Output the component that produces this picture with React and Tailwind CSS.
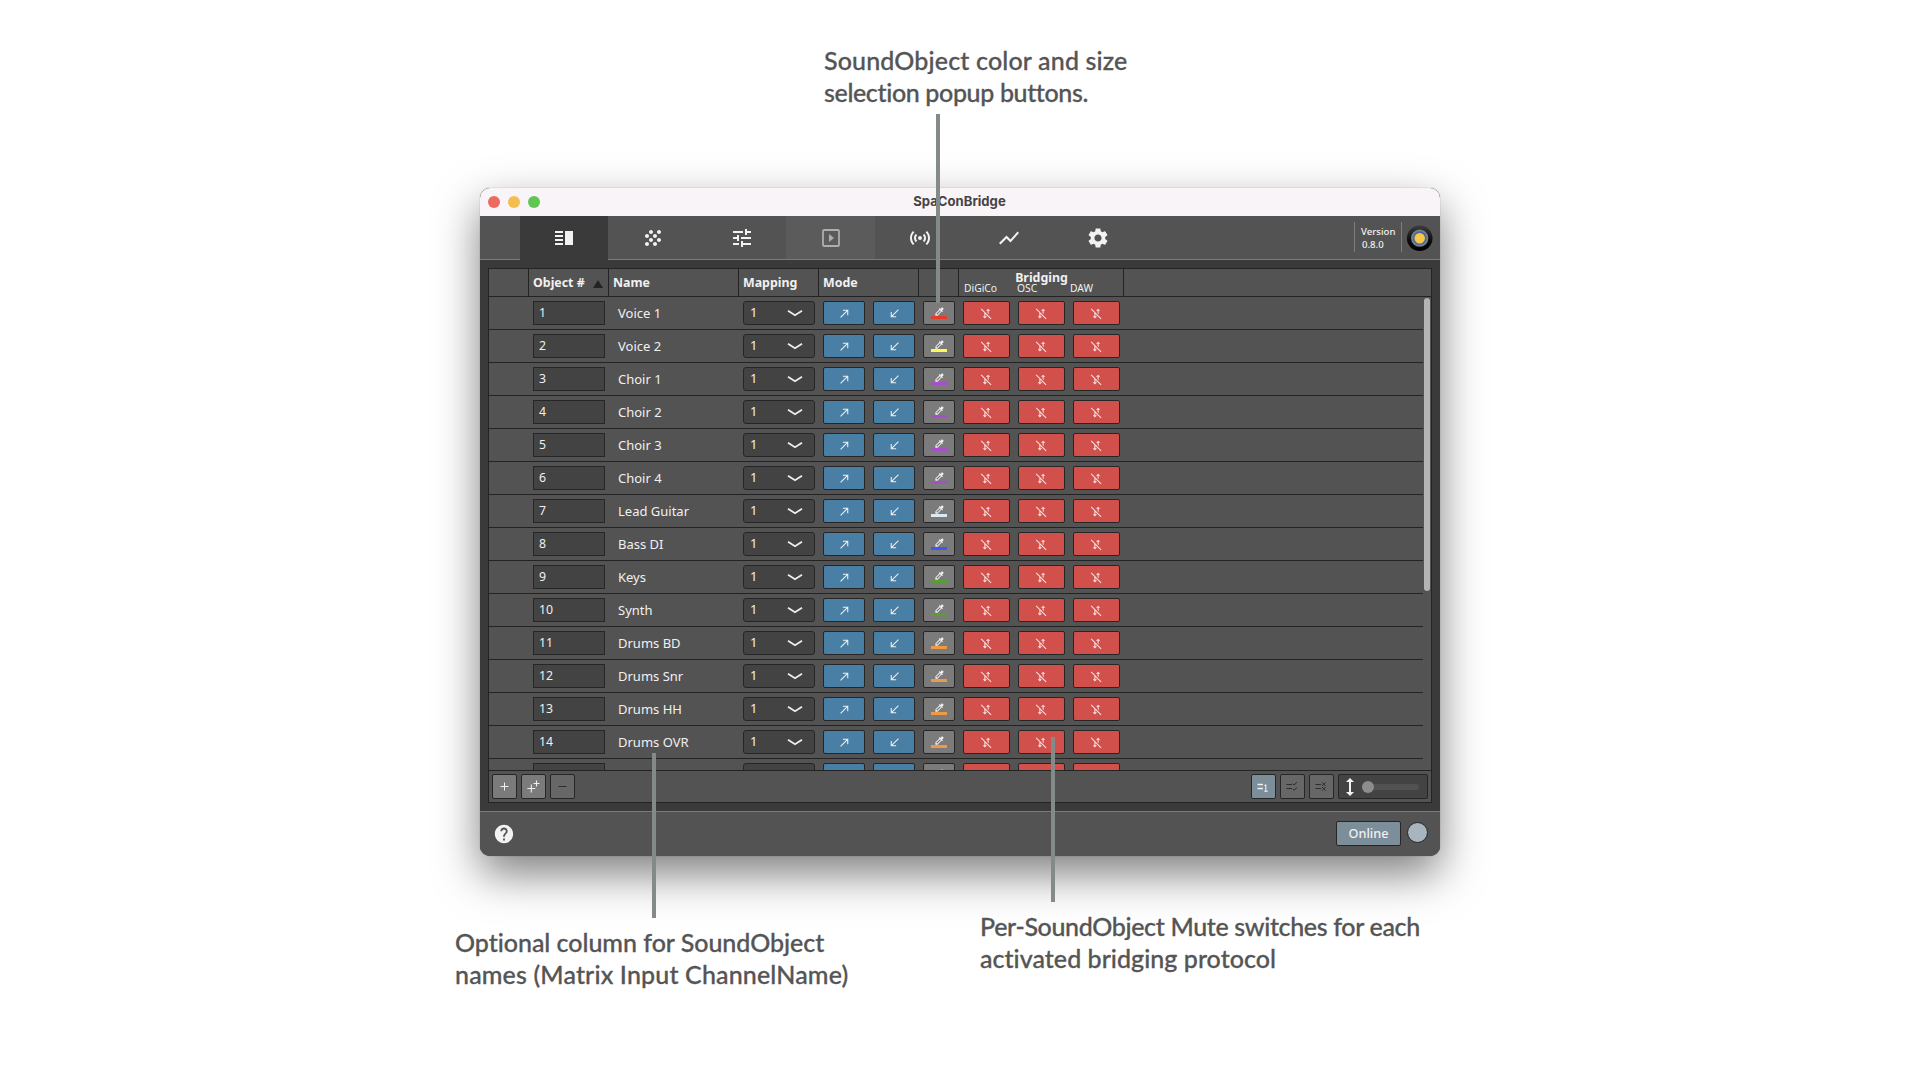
import React from "react";
import {
  MdVerticalSplit,
  MdGrain,
  MdTune,
  MdSensors,
  MdShowChart,
  MdSettings,
  MdCallMade,
  MdCallReceived,
  MdColorize,
  MdMobiledataOff,
  MdHelp,
  MdHeight,
} from "react-icons/md";

const objects = [
  ["Voice 1", "#e8392b"],
  ["Voice 2", "#fdfb52"],
  ["Choir 1", "#a94ecb"],
  ["Choir 2", "#a94ecb"],
  ["Choir 3", "#a94ecb"],
  ["Choir 4", "#a94ecb"],
  ["Lead Guitar", "#dbe9f5"],
  ["Bass DI", "#3f57f3"],
  ["Keys", "#5b9d31"],
  ["Synth", "#5b9d31"],
  ["Drums BD", "#ee9a45"],
  ["Drums Snr", "#ee9a45"],
  ["Drums HH", "#ee9a45"],
  ["Drums OVR", "#ee9a45"],
  ["", "#ee9a45"],
];

function PlayBox() {
  return (
    <svg width="24" height="24" viewBox="0 0 24 24">
      <rect x="4" y="4" width="16" height="16" rx="1" fill="none" stroke="#adadad" strokeWidth="1.8" />
      <path d="M10 8v8l5-4z" fill="#adadad" />
    </svg>
  );
}

function Tab({ children, className = "border-b border-[#7b7b7b]" }) {
  return <div className={`flex h-[44px] w-[89px] items-center justify-center ${className}`}>{children}</div>;
}

function Toolbar() {
  return (
    <div className="flex h-[44px] bg-[#535353] text-[#f2f2f2]">
      <div className="w-[40px] border-b border-[#7b7b7b]" />
      <div className="flex h-[44px] w-[88px] items-center justify-center bg-[#3a3a3a]">
        <MdVerticalSplit size={24} />
      </div>
      <Tab><MdGrain size={24} /></Tab>
      <Tab><MdTune size={24} /></Tab>
      <Tab className="border-b border-[#7b7b7b] bg-[#5b5b5b]"><PlayBox /></Tab>
      <Tab><MdSensors size={24} /></Tab>
      <Tab><MdShowChart size={24} /></Tab>
      <Tab><MdSettings size={24} /></Tab>
      <div className="flex flex-1 items-start justify-end border-b border-[#7b7b7b]">
        <div className="mt-[6px] h-[30px] w-[48px] border-x border-[#7d7d7d] pt-[3px] pl-[6px] text-[9.6px] leading-[13px] font-medium">
          <div>Version</div>
          <div className="pl-px">0.8.0</div>
        </div>
        <svg className="mt-[9px] mr-[7px] ml-[4px]" width="27" height="27" viewBox="0 0 27 27">
          <defs>
            <linearGradient id="knob" x1="0" y1="0" x2="0" y2="1">
              <stop offset="0" stopColor="#3c3c3c" />
              <stop offset="0.6" stopColor="#0c0c0c" />
              <stop offset="1" stopColor="#000" />
            </linearGradient>
          </defs>
          <circle cx="13.7" cy="13.2" r="12.8" fill="url(#knob)" />
          <circle cx="13.7" cy="13.2" r="8.6" fill="#7b8287" />
          <circle cx="13.7" cy="13.2" r="6.9" fill="#4668a6" />
          <circle cx="13.7" cy="13.2" r="5.2" fill="#f7c844" />
        </svg>
      </div>
    </div>
  );
}

function HeaderRow() {
  return (
    <div className="flex h-[28px] border-b border-[#232323] text-[12.4px] font-bold text-[#f0f0f0] *:border-[#232323]">
      <div className="w-[40px] border-r" />
      <div className="flex w-[80px] items-center justify-between border-r pt-[2px] pr-[5px] pl-[4px]">
        <span>Object #</span>
        <svg width="10" height="8" viewBox="0 0 10 8"><path d="M5 0l5 8H0z" fill="#232323" /></svg>
      </div>
      <div className="flex w-[130px] items-center border-r pt-[2px] pl-[4px]">Name</div>
      <div className="flex w-[80px] items-center border-r pt-[2px] pl-[4px]">Mapping</div>
      <div className="flex w-[100px] items-center border-r pt-[2px] pl-[4px]">Mode</div>
      <div className="w-[40px] border-r" />
      <div className="flex w-[165px] flex-col border-r">
        <div className="pt-[2px] pl-px text-center leading-[14px]">Bridging</div>
        <div className="-mt-[2px] flex pl-[5px] text-[10.3px] leading-[11px] font-normal">
          <span className="w-[53px]">DiGiCo</span>
          <span className="w-[53px]">OSC</span>
          <span>DAW</span>
        </div>
      </div>
    </div>
  );
}

function Cell({ className, children }) {
  return (
    <div className={`flex h-[24px] items-center rounded-[2px] border border-[#262626] ${className}`}>
      {children}
    </div>
  );
}

function Row({ index, name, color }) {
  return (
    <div className="flex h-[33px] w-[934px] shrink-0 items-start border-b border-[#232323] pt-[4px] pl-[44px] text-[13px] text-[#f0f0f0]">
      <div className="h-[24px] w-[72px] border border-[#262626] bg-[#434343] pl-[5px] text-[12.3px] leading-[22px]">{index}</div>
      <div className="ml-[13px] w-[125px] leading-[25px]">{name}</div>
      <div className="flex h-[24px] w-[72px] items-center justify-between rounded-[3px] border border-[#262626] bg-[#434343] pr-[11px] pl-[6px]">
        <span>1</span>
        <svg width="16" height="8" viewBox="0 0 16 8">
          <path d="M1 1.8l7 4.4 7-4.4" fill="none" stroke="#eee" strokeWidth="1.8" />
        </svg>
      </div>
      <Cell className="ml-[8px] w-[42px] justify-center bg-[#497fa5]"><MdCallMade size={13} /></Cell>
      <Cell className="ml-[8px] w-[42px] justify-center bg-[#497fa5]"><MdCallReceived size={13} /></Cell>
      <Cell className="ml-[8px] w-[32px] flex-col justify-start bg-[#7b7b7b]">
        <MdColorize size={11} className="mt-[4px] shrink-0" />
        <span className="-mt-px h-[3px] w-[16px] shrink-0" style={{ backgroundColor: color }} />
      </Cell>
      {[0, 1, 2].map((n) => (
        <Cell key={n} className="ml-[8px] w-[47px] justify-center bg-[#d1504b] text-[#f9dedd]"><MdMobiledataOff size={13} /></Cell>
      ))}
    </div>
  );
}

function SquareButton({ className, children }) {
  return (
    <div className={`flex size-[25px] items-center justify-center rounded-[2px] border border-[#262626] ${className}`}>
      <svg width="23" height="23" viewBox="0 0 23 23" fill="none" stroke="currentColor">{children}</svg>
    </div>
  );
}

function TableFooter() {
  return (
    <div className="flex h-[32px] items-start gap-[4px] border-t border-[#232323] bg-[#535353] px-[3px] pt-[3px]">
      <SquareButton className="bg-[#7b7b7b] text-[#f0f0f0]"><path d="M7.5 11.5h8M11.5 7.5v8" /></SquareButton>
      <SquareButton className="bg-[#7b7b7b] text-[#f0f0f0]">
        <path d="M5.3 13.5h8M9.3 9.5v8M11.5 8.5h6M14.5 5.5v6" strokeWidth="1.1" />
      </SquareButton>
      <SquareButton className="bg-[#676767] text-[#2d2d2d]"><path d="M7.5 11.5h8" /></SquareButton>
      <div className="flex-1" />
      <SquareButton className="bg-[#7b8e9a] text-[#f0f0f0]">
        <path d="M5.5 9.5h5.5M5.5 13.5h5.5" strokeWidth="1.3" />
        <path d="M12.4 10.6l1.4-.6v6.2M12.2 16.2h3.6" strokeWidth="1.1" />
      </SquareButton>
      <SquareButton className="bg-[#676767] text-[#2d2d2d]">
        <path d="M5.5 9.5h5.5M5.5 13.5h5.5" strokeWidth="1.2" />
        <path d="M11.7 8.6l1.5 1.5 2.6-3M11.7 13.8l1.5 1.5 2.6-3" />
      </SquareButton>
      <SquareButton className="bg-[#676767] text-[#2d2d2d]">
        <path d="M5.5 9.5h5.5M5.5 13.5h5.5" strokeWidth="1.2" />
        <path d="M12 7.4l3.6 3.6M15.6 7.4L12 11M12 12l3.6 3.6M15.6 12L12 15.6" />
      </SquareButton>
      <div className="flex h-[25px] w-[90px] items-center rounded-[2px] border border-[#262626] bg-[#434343] text-[#f2f2f2]">
        <MdHeight size={24} className="-ml-[1px] shrink-0" />
        <div className="flex h-[6px] w-[57px] items-center rounded-full bg-[#525252]">
          <span className="size-[12px] rounded-full bg-[#8d8d8d]" />
        </div>
      </div>
    </div>
  );
}

function StatusBar() {
  return (
    <div className="flex h-[45px] items-start border-t border-[#7b7b7b] bg-[#535353] pr-[12px] pl-[12.5px]">
      <MdHelp size={22} className="mt-[11px] text-[#f2f2f2]" />
      <div className="flex-1" />
      <div className="mt-[9px] flex h-[25px] w-[65px] items-center justify-center rounded-[2px] border border-[#262626] bg-[#7b8e9a] text-[12.7px] font-medium text-[#f0f0f0]">
        Online
      </div>
      <div className="mt-[10px] ml-[6px] size-[21px] rounded-full border border-[#262626] bg-[#a9b5be]" />
    </div>
  );
}

function AppWindow() {
  return (
    <div className="mx-auto h-[668px] w-[960px] overflow-hidden rounded-[10px] bg-[#3a3a3a] font-['Noto_Sans','Open_Sans',sans-serif] shadow-[0_0_1px_rgba(0,0,0,0.5),0_18px_44px_rgba(0,0,0,0.5)]">
      <div className="relative flex h-[28px] items-center justify-center bg-[#f8f4f7] pr-px font-[Inter,sans-serif] text-[13.1px] font-bold text-[#454345]">
        <div className="absolute left-[8px] flex gap-[8px]">
          <span className="size-[12px] rounded-full bg-[#ec6a5e]" />
          <span className="size-[12px] rounded-full bg-[#f4be4f]" />
          <span className="size-[12px] rounded-full bg-[#61c554]" />
        </div>
        SpaConBridge
      </div>
      <Toolbar />
      <div className="mx-[8px] mt-[8px] mb-[8px] flex h-[535px] flex-col border border-[#232323] bg-[#535353]">
        <HeaderRow />
        <div className="flex h-[473px] justify-between overflow-hidden">
          <div className="flex flex-col">
            {objects.map(([name, color], i) => (
              <Row key={i} index={i + 1} name={name} color={color} />
            ))}
          </div>
          <div className="mt-px mr-px h-[293px] w-[6px] rounded-full bg-[#b4b4b4]" />
        </div>
        <TableFooter />
      </div>
      <StatusBar />
    </div>
  );
}

function Caption({ className, lines }) {
  return (
    <div className={`absolute font-[Lato,sans-serif] text-[25px] leading-[32px] font-medium whitespace-nowrap text-[#555] [-webkit-text-stroke:0.3px_#555] ${className}`}>
      {lines.map(([text, spacing]) => (
        <div key={text} className={spacing}>{text}</div>
      ))}
    </div>
  );
}

export default function App() {
  return (
    <div className="relative h-[1080px] w-[1920px] overflow-hidden bg-white pt-[188px]">
      <AppWindow />
      <div className="absolute top-[114px] left-[936px] h-[189px] w-[4px] bg-[#838a87]" />
      <div className="absolute top-[753px] left-[652px] h-[165px] w-[4px] bg-[#838a87]" />
      <div className="absolute top-[737px] left-[1051px] h-[165px] w-[4px] bg-[#838a87]" />
      <Caption
        className="top-[44px] left-[824px]"
        lines={[["SoundObject color and size", "tracking-[0.16px]"], ["selection popup buttons.", "tracking-[-0.36px]"]]}
      />
      <Caption
        className="top-[926px] left-[455px]"
        lines={[["Optional column for SoundObject", "tracking-[-0.03px]"], ["names (Matrix Input ChannelName)", "tracking-[0.15px]"]]}
      />
      <Caption
        className="top-[910px] left-[980px]"
        lines={[["Per-SoundObject Mute switches for each", "tracking-[-0.34px]"], ["activated bridging protocol", "tracking-[0.04px]"]]}
      />
    </div>
  );
}
